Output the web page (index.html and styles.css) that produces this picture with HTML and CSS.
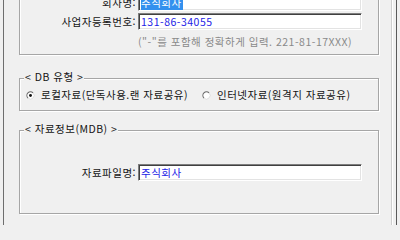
FILE: index.html
```html
<!DOCTYPE html>
<html lang="ko">
<head>
<meta charset="utf-8">
<link rel="stylesheet" href="styles.css">
</head>
<body>
<div class="frame">
  <div class="group company">
    <div class="row">
      <span class="lbl">회사명:</span>
      <div class="field"><span class="sel">주식회사</span></div>
    </div>
    <div class="row">
      <span class="lbl">사업자등록번호:</span>
      <div class="field">131-86-34055</div>
    </div>
    <div class="hint">("-"를 포함해 정확하게 입력. 221-81-17XXX)</div>
  </div>

  <div class="group db">
    <div class="legend">&lt; DB 유형 &gt;</div>
    <div class="radios">
      <div class="radio">
        <svg class="rb" width="9" height="9" viewBox="0 0 10 10"><circle cx="5" cy="5" r="4" fill="#fff"/><path d="M2.17 7.83 A4 4 0 0 1 7.83 2.17" fill="none" stroke="#6a6a6a" stroke-width="1.2"/><path d="M7.83 2.17 A4 4 0 0 1 2.17 7.83" fill="none" stroke="#dcdcdc" stroke-width="1"/><circle cx="5" cy="5" r="1.6" fill="#111"/></svg>
        <span>로컬자료(단독사용.랜 자료공유)</span>
      </div>
      <div class="radio">
        <svg class="rb" width="9" height="9" viewBox="0 0 10 10"><circle cx="5" cy="5" r="4" fill="#fff"/><path d="M2.17 7.83 A4 4 0 0 1 7.83 2.17" fill="none" stroke="#6a6a6a" stroke-width="1.2"/><path d="M7.83 2.17 A4 4 0 0 1 2.17 7.83" fill="none" stroke="#dcdcdc" stroke-width="1"/></svg>
        <span>인터넷자료(원격지 자료공유)</span>
      </div>
    </div>
  </div>

  <div class="group mdb">
    <div class="legend">&lt; 자료정보(MDB) &gt;</div>
    <div class="row file">
      <span class="lbl">자료파일명:</span>
      <div class="field">주식회사</div>
    </div>
  </div>
</div>
</body>
</html>
```

FILE: styles.css
```css
html, body {
  margin: 0;
  height: 225px;
  overflow: hidden;
}

body {
  background: #f0f0f0;
  font-family: "Noto Sans CJK KR", "Noto Sans", sans-serif;
  font-size: 10.5px;
  letter-spacing: 0.5px;
  color: #141414;
}

.frame {
  display: flex;
  flex-direction: column;
  align-items: flex-start;
  margin-left: 3px;
  width: 392px;
  height: 225px;
  border-left: 1px solid #6e6e6e;
  border-right: 1px solid #5a5a5a;
  box-shadow: inset -3px 0 0 #f0f0f0, inset -4px 0 0 #fff, inset -5px 0 0 #cfcfcf;
}

.group {
  margin-left: 15px;
  width: 358px;
  border: 1px solid #a6a6a6;
  box-shadow: inset 1px 1px 0 #fff, 1px 1px 0 #fff;
}

.company {
  margin-top: -20px;
  padding: 13px 0 6px;
}

.row {
  display: grid;
  grid-template-columns: 116px 224px;
  column-gap: 2px;
  align-items: center;
  height: 17px;
}

.row + .row {
  margin-top: 2px;
}

.lbl {
  text-align: right;
  line-height: 17px;
  white-space: nowrap;
}

.field {
  box-sizing: border-box;
  height: 17px;
  border: 1px solid;
  border-color: #7e7e7e #fff #fff #7e7e7e;
  box-shadow: inset 1px 1px 0 #404040, inset -1px -1px 0 #e3e3e3;
  background: #fff;
  color: #2222e6;
  padding-left: 2px;
  line-height: 15px;
  white-space: nowrap;
}

.sel {
  background: #3390ee;
  color: #fff;
  padding-right: 1px;
}

.hint {
  margin: 6px 0 0 118px;
  line-height: 12px;
  color: #8a8a8a;
  white-space: nowrap;
}

.db {
  margin-top: 23px;
  padding-bottom: 9px;
}

.legend {
  width: fit-content;
  margin: -8px 0 0 4px;
  padding: 0 1px;
  background: #f0f0f0;
  line-height: 12px;
  white-space: nowrap;
}

.radios {
  display: grid;
  grid-template-columns: 176px auto;
  margin-top: 6px;
  padding-left: 6px;
  line-height: 12px;
}

.radio {
  display: flex;
  align-items: center;
  gap: 6px;
  white-space: nowrap;
}

.rb {
  display: block;
  flex: none;
}

.mdb {
  margin-top: 19px;
  padding-bottom: 32px;
}

.file {
  margin-top: 29px;
}
```
